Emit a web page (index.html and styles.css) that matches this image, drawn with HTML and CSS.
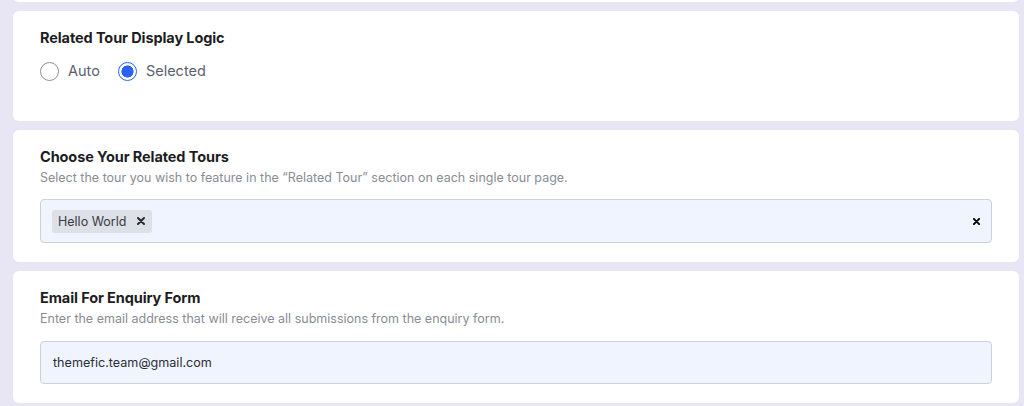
FILE: index.html
```html
<!DOCTYPE html>
<html>
<head>
<meta charset="utf-8">
<link rel="stylesheet" href="styles.css">
</head>
<body>
<div class="page">
  <div class="card card-top"></div>

  <div class="card card-radio">
    <h3 class="title">Related Tour Display Logic</h3>
    <div class="radios">
      <label class="radio-item"><span class="radio"></span><span class="radio-label">Auto</span></label>
      <label class="radio-item"><span class="radio checked"></span><span class="radio-label">Selected</span></label>
    </div>
  </div>

  <div class="card">
    <h3 class="title">Choose Your Related Tours</h3>
    <p class="desc">Select the tour you wish to feature in the “Related Tour” section on each single tour page.</p>
    <div class="field select">
      <span class="tag">Hello World
        <svg class="x-icon" viewBox="0 0 8 8" width="8" height="8"><path d="M1 1L7 7M7 1L1 7" stroke="currentColor" stroke-width="2" stroke-linecap="round"/></svg>
      </span>
      <svg class="x-icon clear" viewBox="0 0 8 8" width="7" height="7"><path d="M1 1L7 7M7 1L1 7" stroke="currentColor" stroke-width="2.2" stroke-linecap="round"/></svg>
    </div>
  </div>

  <div class="card">
    <h3 class="title">Email For Enquiry Form</h3>
    <p class="desc">Enter the email address that will receive all submissions from the enquiry form.</p>
    <div class="field input">themefic.team@gmail.com</div>
  </div>
</div>
</body>
</html>
```

FILE: styles.css
```css
* { box-sizing: border-box; }
html, body {
  margin: 0;
  padding: 0;
  background: #e8e6f5;
  font-family: Inter, "Liberation Sans", sans-serif;
  overflow: hidden;
}
.page {
  display: flex;
  flex-direction: column;
  gap: 9px;
  padding: 0 5px 0 13px;
  margin-top: -20px;
}
.card {
  background: #ffffff;
  border-radius: 6px;
  padding: 17px 27px 19px 27px;
}
.card-top {
  height: 22px;
  padding: 0;
}
.card-radio {
  height: 110px;
}
.title {
  margin: 0;
  font-size: 14.5px;
  line-height: 20px;
  font-weight: 700;
  color: #1c1d22;
  letter-spacing: -0.1px;
}
.radios {
  display: flex;
  align-items: center;
  gap: 18px;
  margin-top: 13px;
}
.radio-item {
  display: flex;
  align-items: center;
  gap: 9px;
}
.radio {
  width: 19px;
  height: 19px;
  border-radius: 50%;
  border: 1px solid #8e919c;
  background: #fff;
}
.radio.checked {
  border: 1.5px solid #2a62f5;
  background: radial-gradient(circle, #2a62f5 0 5.8px, #fff 6.3px);
}
.radio-label {
  font-size: 14.5px;
  color: #5d606f;
  line-height: 20px;
}
.desc {
  margin: 2px 0 0;
  font-size: 12.5px;
  line-height: 18px;
  color: #8a8c95;
}
.field {
  margin-top: 12px;
  height: 44px;
  background: #f0f4fe;
  border: 1px solid #cdd0d9;
  border-radius: 4px;
  display: flex;
  align-items: center;
}
.select {
  padding: 0 11px 0 11px;
  justify-content: space-between;
}
.tag {
  display: inline-flex;
  align-items: center;
  height: 23px;
  padding: 0 4px 0 6px;
  background: #dde0e7;
  border-radius: 3px;
  font-size: 12.5px;
  color: #3a3c44;
  gap: 11px;
}
.x-icon {
  display: block;
  color: #2a2b30;
}
.tag .x-icon {
  margin-right: 3px;
}
.clear {
  color: #000;
}
.input {
  margin-top: 13px;
  height: 43px;
  padding: 0 12px;
  font-size: 12.6px;
  color: #2c2e35;
}
```
